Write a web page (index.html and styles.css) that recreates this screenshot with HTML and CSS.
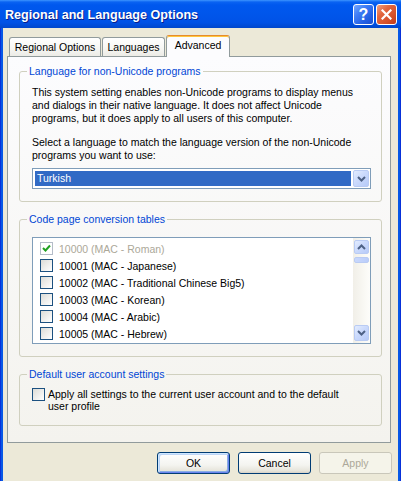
FILE: index.html
```html
<!DOCTYPE html>
<html lang="en">
<head>
<meta charset="utf-8">
<title>Regional and Language Options</title>
<link rel="stylesheet" href="styles.css">
</head>
<body>
<div class="window">
  <div class="titlebar">
    <span class="title">Regional and Language Options</span>
    <span class="tbtn help">?</span>
    <span class="tbtn close">
      <svg width="11" height="11" viewBox="0 0 11 11"><path d="M1.5 1.5 L9.5 9.5 M9.5 1.5 L1.5 9.5" stroke="#fff" stroke-width="2.2" stroke-linecap="square"/></svg>
    </span>
  </div>
  <div class="client">
    <div class="tabs">
      <div class="tab t1">Regional Options</div>
      <div class="tab t2">Languages</div>
      <div class="tab t3 active">Advanced</div>
    </div>
    <div class="panel">
      <fieldset class="group">
        <legend>Language for non-Unicode programs</legend>
        <div class="gbody">
          <p class="p1">This system setting enables non-Unicode programs to display menus<br>and dialogs in their native language. It does not affect Unicode<br>programs, but it does apply to all users of this computer.</p>
          <p class="p2">Select a language to match the language version of the non-Unicode<br>programs you want to use:</p>
          <div class="combo">
            <div class="sel">Turkish</div>
            <div class="sbtn drop">
              <svg width="9" height="6" viewBox="0 0 9 6"><path d="M1 1 L4.5 4.5 L8 1" fill="none" stroke="#4D6185" stroke-width="2"/></svg>
            </div>
          </div>
        </div>
      </fieldset>
      <fieldset class="group">
        <legend>Code page conversion tables</legend>
        <div class="gbody">
          <div class="list">
            <div class="items">
              <div class="item disabled"><span class="cb off"><svg width="11" height="11" viewBox="0 0 11 11"><path d="M2 5 L4.5 7.5 L9 2.5" fill="none" stroke="#21A121" stroke-width="2"/></svg></span><span>10000 (MAC - Roman)</span></div>
              <div class="item"><span class="cb"></span><span>10001 (MAC - Japanese)</span></div>
              <div class="item"><span class="cb"></span><span>10002 (MAC - Traditional Chinese Big5)</span></div>
              <div class="item"><span class="cb"></span><span>10003 (MAC - Korean)</span></div>
              <div class="item"><span class="cb"></span><span>10004 (MAC - Arabic)</span></div>
              <div class="item"><span class="cb"></span><span>10005 (MAC - Hebrew)</span></div>
            </div>
            <div class="scroll">
              <div class="sbtn up">
                <svg width="9" height="6" viewBox="0 0 9 6"><path d="M1 5 L4.5 1.5 L8 5" fill="none" stroke="#4D6185" stroke-width="2"/></svg>
              </div>
              <div class="thumb"></div>
              <div class="sbtn down">
                <svg width="9" height="6" viewBox="0 0 9 6"><path d="M1 1 L4.5 4.5 L8 1" fill="none" stroke="#4D6185" stroke-width="2"/></svg>
              </div>
            </div>
          </div>
        </div>
      </fieldset>
      <fieldset class="group">
        <legend>Default user account settings</legend>
        <div class="gbody">
          <div class="checkrow">
            <span class="cb"></span>
            <span class="ctext">Apply all settings to the current user account and to the default<br>user profile</span>
          </div>
        </div>
      </fieldset>
    </div>
    <div class="buttons">
      <div class="btn default">OK</div>
      <div class="btn">Cancel</div>
      <div class="btn disabled">Apply</div>
    </div>
  </div>
</div>
</body>
</html>
```

FILE: styles.css
```css
html, body {
  margin: 0;
  padding: 0;
}

body {
  font-family: "Liberation Sans", Arial, sans-serif;
  font-size: 10.5px;
  color: #000;
}

.window {
  width: 401px;
  height: 481px;
  display: flex;
  flex-direction: column;
  background: #0758E6;
  box-shadow: inset 1px 0 #0831D9, inset -1px 0 #0831D9;
  overflow: hidden;
}

.titlebar {
  height: 28px;
  box-sizing: border-box;
  display: flex;
  align-items: center;
  padding: 1px 4px 0 5px;
  background: linear-gradient(#3D95FF 0, #0A63F2 2px, #0058EE 5px, #0056EB 50%, #0052E6 80%, #0047CC 100%);
}

.title {
  flex: 1;
  color: #fff;
  font-weight: bold;
  font-size: 12.6px;
  text-shadow: 1px 1px #0A1E8A;
  white-space: nowrap;
}

.tbtn {
  width: 21px;
  height: 21px;
  box-sizing: border-box;
  border: 1px solid #fff;
  border-radius: 3px;
  display: flex;
  align-items: center;
  justify-content: center;
  color: #fff;
  font-weight: bold;
  font-size: 16px;
  line-height: 1;
}

.help {
  margin-right: 2px;
  background: linear-gradient(135deg, #75A7FF 0, #3F7DF5 35%, #2460E4 70%, #1B4FD0 100%);
}

.close {
  background: linear-gradient(135deg, #F0A07F 0, #E2663E 35%, #D4512B 70%, #C03A1A 100%);
}

.client {
  flex: 1;
  margin: 0 3px;
  background: #ECE9D8;
  padding: 7px 6px 0 4px;
  display: flex;
  flex-direction: column;
}

.tabs {
  display: flex;
  align-items: flex-end;
  height: 21px;
  margin-left: 2px;
}

.tab {
  box-sizing: border-box;
  height: 19px;
  border: 1px solid #919B9C;
  border-bottom: none;
  border-radius: 3px 3px 0 0;
  background: linear-gradient(#FFFFFF, #F7F7F4 55%, #ECEBE6);
  text-align: center;
  line-height: 18px;
  white-space: nowrap;
}

.t1 { width: 92px; }
.t2 { width: 63px; margin-left: 1px; }
.t3 { width: 64px; margin-left: 1px; }

.tab.active {
  height: 22px;
  margin-bottom: -1px;
  position: relative;
  z-index: 1;
  background: #FCFCFE;
  border-top: 1px solid #E68B2C;
  box-shadow: inset 0 1px #FFC73C;
}

.panel {
  box-sizing: border-box;
  width: 384px;
  height: 387px;
  border: 1px solid #919B9C;
  background: linear-gradient(#FCFCFE, #F4F3EE);
  padding: 8px 8px 0 11px;
  display: flex;
  flex-direction: column;
  gap: 11px;
}

.group {
  margin: 0;
  padding: 0;
  min-width: 0;
  border: 1px solid #D0D0BF;
  border-radius: 3px;
}

.group legend {
  margin-left: 7px;
  padding: 0 2px;
  color: #0046D5;
  font-size: 10.5px;
  line-height: 13px;
}

.gbody {
  padding: 0 10px 12px 12px;
}

.gbody p {
  margin: 0;
  line-height: 13px;
  white-space: nowrap;
}

.p1 { margin-top: 8px !important; }
.p2 { margin-top: 11px !important; }

.combo {
  margin-top: 6px;
  height: 21px;
  box-sizing: border-box;
  border: 1px solid #7F9DB9;
  background: #fff;
  padding: 1px;
  display: flex;
}

.sel {
  flex: 1;
  height: 15px;
  margin: 1px 2px 1px 1px;
  background: #316AC5;
  color: #fff;
  line-height: 15px;
  padding-left: 2px;
}

.sbtn {
  box-sizing: border-box;
  border: 1px solid #B9CBF3;
  border-radius: 2px;
  background: linear-gradient(135deg, #E3ECFE 0, #CBDAFC 45%, #B6CAF8 100%);
  display: flex;
  align-items: center;
  justify-content: center;
}

.drop {
  width: 16px;
  height: 17px;
}

.list {
  margin-top: 11px;
  height: 107px;
  box-sizing: border-box;
  border: 1px solid #7F9DB9;
  background: #fff;
  display: flex;
}

.items {
  flex: 1;
  padding: 2px 0 0 7px;
}

.item {
  height: 17px;
  display: flex;
  align-items: center;
  gap: 6px;
  white-space: nowrap;
}

.item.disabled {
  color: #ACA899;
}

.cb {
  flex: none;
  width: 13px;
  height: 13px;
  box-sizing: border-box;
  border: 1px solid #1C5180;
  background: linear-gradient(135deg, #DCDCD7, #FFFFFF);
  display: flex;
  align-items: center;
  justify-content: center;
}

.cb.off {
  border-color: #B4BCC8;
  background: #fff;
}

.scroll {
  width: 17px;
  box-sizing: border-box;
  padding: 2px 1px 2px 1px;
  background: linear-gradient(to right, #F1EFE8, #FDFDFA);
  display: flex;
  flex-direction: column;
}

.up {
  height: 14px;
}

.thumb {
  margin-top: 3px;
  height: 6px;
  box-sizing: border-box;
  border: 1px solid #B9CBF3;
  border-radius: 2px;
  background: linear-gradient(to right, #C9D8FC, #BACDFA);
}

.down {
  margin-top: auto;
  height: 16px;
}

.checkrow {
  margin-top: 6px;
  height: 26px;
  display: flex;
  align-items: flex-start;
}

.checkrow .cb {
  margin-top: 1px;
}

.ctext {
  margin-left: 3px;
  line-height: 12px;
  padding-top: 1px;
  white-space: nowrap;
}

.buttons {
  margin-top: 9px;
  display: flex;
  justify-content: flex-end;
  gap: 8px;
}

.btn {
  width: 73px;
  height: 22px;
  box-sizing: border-box;
  border: 1px solid #003C74;
  border-radius: 3px;
  background: linear-gradient(#FFFFFF 0, #F4F4F0 60%, #E6E4DA 90%, #D6D0C5 100%);
  display: flex;
  align-items: center;
  justify-content: center;
}

.btn.default {
  box-shadow: inset 1px 1px #CEE7FF, inset -1px -1px #6982EE, inset 2px 2px #BCD4F6, inset -2px -2px #89ADE4;
}

.btn.disabled {
  border-color: #C9C7BA;
  background: #F5F4EA;
  color: #ACA899;
}
```
